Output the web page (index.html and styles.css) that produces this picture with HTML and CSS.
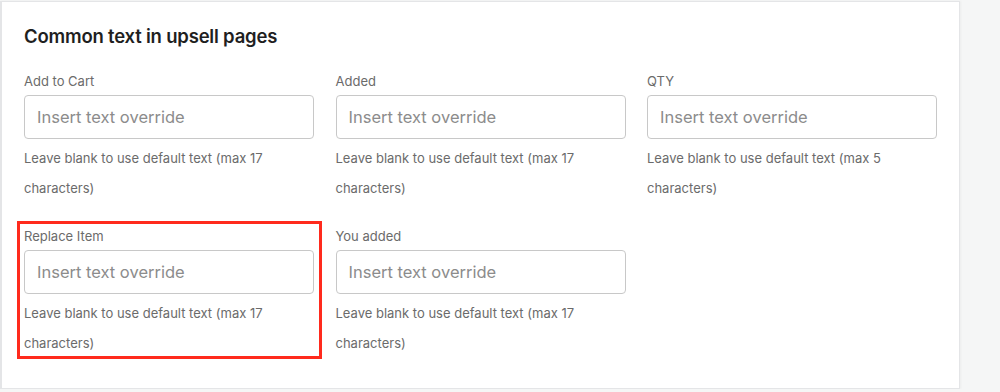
FILE: index.html
```html
<!DOCTYPE html>
<html lang="en">
<head>
  <meta charset="UTF-8">
  <meta name="viewport" content="width=device-width, initial-scale=1.0">
  <title>Upsell text</title>
  <link rel="stylesheet" href="styles.css">
</head>
<body>
  <div class="page">
    <div class="card">
      <h2>Common text in upsell pages</h2>

      <div class="fields">
        <div class="field">
          <label for="addToCart">Add to Cart</label>
          <input id="addToCart" type="text" placeholder="Insert text override">
          <p class="help">Leave blank to use default text (max 17 characters)</p>
        </div>
        <div class="field">
          <label for="added">Added</label>
          <input id="added" type="text" placeholder="Insert text override">
          <p class="help">Leave blank to use default text (max 17 characters)</p>
        </div>
        <div class="field">
          <label for="qty">QTY</label>
          <input id="qty" type="text" placeholder="Insert text override">
          <p class="help">Leave blank to use default text (max 5 characters)</p>
        </div>
        <div class="field highlighted">
          <label for="replaceItem">Replace Item</label>
          <input id="replaceItem" type="text" placeholder="Insert text override">
          <p class="help">Leave blank to use default text (max 17 characters)</p>
        </div>
        <div class="field">
          <label for="youAdded">You added</label>
          <input id="youAdded" type="text" placeholder="Insert text override">
          <p class="help">Leave blank to use default text (max 17 characters)</p>
        </div>
      </div>
    </div>
  </div>
</body>
</html>
```

FILE: styles.css
```css
body {
  margin: 0;
  font-family: Inter, 'Liberation Sans', Arial, sans-serif;
  background-color: #f5f6f6;
}

.page {
  display: flex;
}

.card {
  width: 913px;
  padding: 20px 22px 30px 22px;
  margin-top: 1px;
  background-color: #fff;
  border: 1px solid #e4e5e7;
  border-left-width: 2px;
  box-shadow: 1px 0 2px rgba(0, 0, 0, 0.04);
}

h2 {
  margin: 0 0 21px;
  font-size: 18.5px;
  font-weight: 600;
  line-height: 28px;
  color: #1f1f1f;
  letter-spacing: -0.2px;
}

.fields {
  display: grid;
  grid-template-columns: repeat(3, 290px);
  column-gap: 21.5px;
  row-gap: 23px;
}

.field {
  position: relative;
  display: flex;
  flex-direction: column;
}

.field label {
  font-size: 13px;
  line-height: 20px;
  color: #6b6b6b;
  margin-bottom: 4px;
}

.field input {
  box-sizing: border-box;
  height: 44px;
  padding: 0 12px;
  font-family: inherit;
  font-size: 16.5px;
  color: #1f1f1f;
  border: 1px solid #c8c8c8;
  border-radius: 4px;
  outline: none;
}

.field input::placeholder {
  color: #8c8c8c;
}

.help {
  margin: 4px 0 0;
  font-size: 13px;
  line-height: 30px;
  color: #6b6b6b;
}

.highlighted::after {
  content: '';
  position: absolute;
  top: -5px;
  left: -7px;
  right: -8px;
  bottom: -1px;
  border: 3px solid #ff2a1d;
  pointer-events: none;
}
```
